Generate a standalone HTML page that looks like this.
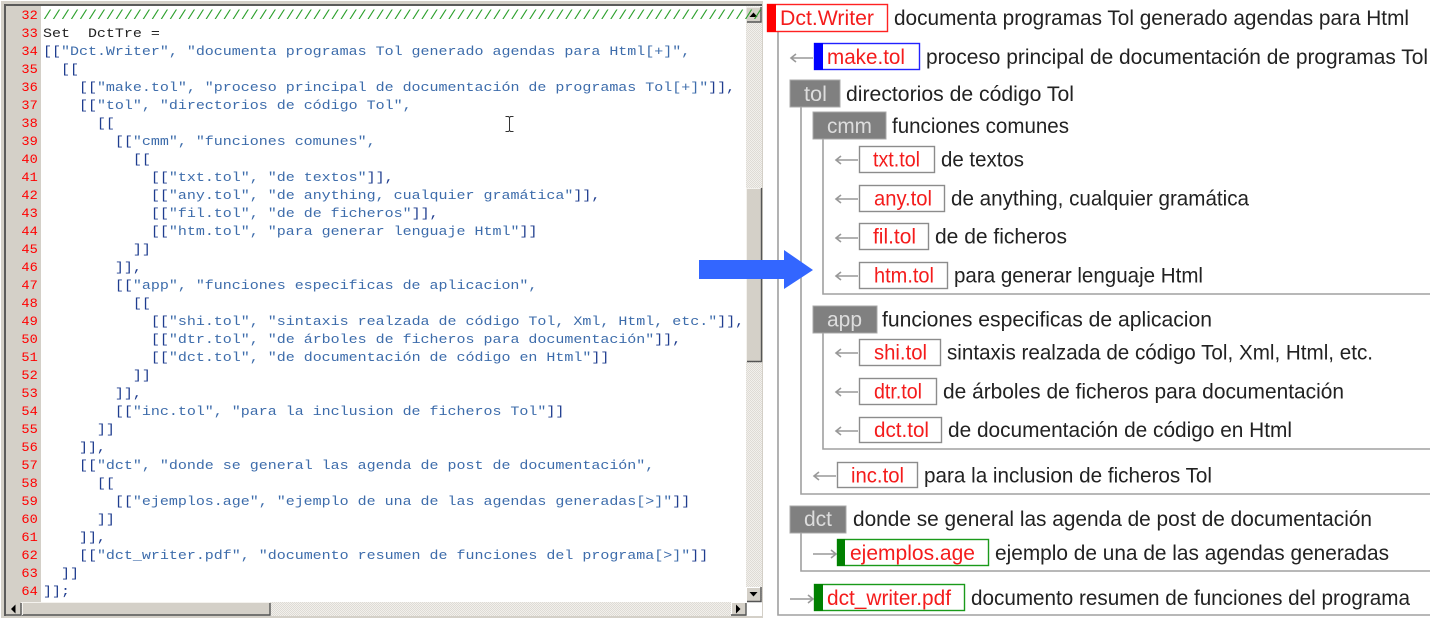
<!DOCTYPE html>
<html><head><meta charset="utf-8"><style>
html,body{margin:0;padding:0;background:#fff;width:1436px;height:620px;overflow:hidden}
svg{display:block;filter:blur(.3px)}
.c text{font-family:"Liberation Mono",monospace;font-size:13px;white-space:pre;fill:#3d6cab}
.c .b{fill:#1f3d8f}
.n text{font-family:"Liberation Mono",monospace;font-size:13px;fill:#f00;text-anchor:end;font-weight:normal}
.t text{font-family:"Liberation Sans",sans-serif;font-size:21px;fill:#222;white-space:pre}
.t text.r{fill:#f41c1c}
.t text.w{fill:#ddd}
.g{fill:#808080;stroke:#a8a8a8;stroke-width:1}
.bx{fill:#fff;stroke:#8c8c8c;stroke-width:1.4}
.l{stroke:#a0a0a0;stroke-width:1.6;fill:none}
.a{stroke:#999;stroke-width:1.6;fill:none}
</style></head><body>
<svg width="1436" height="620" viewBox="0 0 1436 620" xmlns="http://www.w3.org/2000/svg">
<defs><pattern id="d" width="2" height="2" patternUnits="userSpaceOnUse"><rect width="2" height="2" fill="#f2f0ec"/><rect width="1" height="1" fill="#dedbd5"/><rect x="1" y="1" width="1" height="1" fill="#dedbd5"/></pattern></defs>
<rect width="1436" height="620" fill="#fff"/>
<rect x="1" y="1" width="762" height="617" fill="#d4d0c8"/>
<rect x="4" y="4" width="758" height="2" fill="#5a5a5a"/>
<rect x="4" y="4" width="2" height="612" fill="#5a5a5a"/>
<rect x="6" y="6" width="756" height="610" fill="#fff"/>
<rect x="6" y="6" width="35" height="596" fill="#d4d0c8"/>
<!-- scrollbars -->
<rect x="746" y="6" width="16" height="596" fill="url(#d)"/>
<rect x="6" y="602" width="740" height="14" fill="url(#d)"/>
<rect x="746" y="7" width="15" height="15" fill="#d4d0c8"/><path d="M746 22V7H761" fill="none" stroke="#fff"/><path d="M747 22H761V7" fill="none" stroke="#555" stroke-width="1.4"/><path d="M749.500 17L753.500 12.500L757.500 17Z" fill="#000"/>
<rect x="746" y="188" width="16" height="174" fill="#d4d0c8"/><path d="M746.500 362V188.500H761" fill="none" stroke="#f4f2ee"/><path d="M747 361.500H761.500V188" fill="none" stroke="#555" stroke-width="1.4"/>
<rect x="746" y="587" width="15" height="15" fill="#d4d0c8"/><path d="M746.500 602V587.500H761" fill="none" stroke="#fff"/><path d="M747 601.500H761V587" fill="none" stroke="#555" stroke-width="1.4"/><path d="M749.500 592L753.500 596.500L757.500 592Z" fill="#000"/>
<rect x="6" y="602" width="15" height="14" fill="#d4d0c8"/><path d="M21 603V615H6" fill="none" stroke="#555" stroke-width="1.400"/><path d="M15.500 604.500L11 609L15.500 613.500Z" fill="#000"/>
<rect x="22" y="602" width="248" height="14" fill="#d4d0c8"/><path d="M270 603V615H22" fill="none" stroke="#555" stroke-width="1.400"/><path d="M22.500 615V602.500H270" fill="none" stroke="#f4f2ee"/>
<rect x="731" y="602" width="15" height="14" fill="#d4d0c8"/><path d="M731.500 615V602.500H746" fill="none" stroke="#fff"/><path d="M746 603V615H731" fill="none" stroke="#555" stroke-width="1.400"/><path d="M736 604.500L740.500 609L736 613.500Z" fill="#000"/>
<!-- I-beam cursor -->
<path d="M505.500 116.500H508.500L509.500 117.500L510.500 116.500H513.500M509.500 117.500V130.500M505.500 131.500H508.500L509.500 130.500L510.500 131.500H513.500" fill="none" stroke="#333" stroke-width="1"/>
<!-- line numbers -->
<g class="n" transform="scale(1.05,1)">
<text x="36" y="19">32</text><text x="36" y="37">33</text><text x="36" y="55">34</text><text x="36" y="73">35</text><text x="36" y="91">36</text><text x="36" y="109">37</text><text x="36" y="127">38</text><text x="36" y="145">39</text><text x="36" y="163">40</text><text x="36" y="181">41</text><text x="36" y="199">42</text><text x="36" y="217">43</text><text x="36" y="235">44</text><text x="36" y="253">45</text><text x="36" y="271">46</text><text x="36" y="289">47</text><text x="36" y="307">48</text><text x="36" y="325">49</text><text x="36" y="343">50</text><text x="36" y="361">51</text><text x="36" y="379">52</text><text x="36" y="397">53</text><text x="36" y="415">54</text><text x="36" y="433">55</text><text x="36" y="451">56</text><text x="36" y="469">57</text><text x="36" y="487">58</text><text x="36" y="505">59</text><text x="36" y="523">60</text><text x="36" y="541">61</text><text x="36" y="559">62</text><text x="36" y="577">63</text><text x="36" y="595">64</text>
</g>
<!-- code -->
<g class="c" transform="translate(43,0) scale(1.154,1)">
<text y="19" style="fill:#2ca02c">////////////////////////////////////////////////////////////////////////////////</text>
<text y="37" style="fill:#222">Set  DctTre =</text>
<text y="55"><tspan class="b">[[</tspan>"Dct.Writer", "documenta programas Tol generado agendas para Html[+]",</text>
<text y="73" class="b">  [[</text>
<text y="91"><tspan class="b">    [[</tspan>"make.tol", "proceso principal de documentación de programas Tol[+]"<tspan class="b">]],</tspan></text>
<text y="109"><tspan class="b">    [[</tspan>"tol", "directorios de código Tol",</text>
<text y="127" class="b">      [[</text>
<text y="145"><tspan class="b">        [[</tspan>"cmm", "funciones comunes",</text>
<text y="163" class="b">          [[</text>
<text y="181"><tspan class="b">            [[</tspan>"txt.tol", "de textos"<tspan class="b">]],</tspan></text>
<text y="199"><tspan class="b">            [[</tspan>"any.tol", "de anything, cualquier gramática"<tspan class="b">]],</tspan></text>
<text y="217"><tspan class="b">            [[</tspan>"fil.tol", "de de ficheros"<tspan class="b">]],</tspan></text>
<text y="235"><tspan class="b">            [[</tspan>"htm.tol", "para generar lenguaje Html"<tspan class="b">]]</tspan></text>
<text y="253" class="b">          ]]</text>
<text y="271" class="b">        ]],</text>
<text y="289"><tspan class="b">        [[</tspan>"app", "funciones especificas de aplicacion",</text>
<text y="307" class="b">          [[</text>
<text y="325"><tspan class="b">            [[</tspan>"shi.tol", "sintaxis realzada de código Tol, Xml, Html, etc."<tspan class="b">]],</tspan></text>
<text y="343"><tspan class="b">            [[</tspan>"dtr.tol", "de árboles de ficheros para documentación"<tspan class="b">]],</tspan></text>
<text y="361"><tspan class="b">            [[</tspan>"dct.tol", "de documentación de código en Html"<tspan class="b">]]</tspan></text>
<text y="379" class="b">          ]]</text>
<text y="397" class="b">        ]],</text>
<text y="415"><tspan class="b">        [[</tspan>"inc.tol", "para la inclusion de ficheros Tol"<tspan class="b">]]</tspan></text>
<text y="433" class="b">      ]]</text>
<text y="451" class="b">    ]],</text>
<text y="469"><tspan class="b">    [[</tspan>"dct", "donde se general las agenda de post de documentación",</text>
<text y="487" class="b">      [[</text>
<text y="505"><tspan class="b">        [[</tspan>"ejemplos.age", "ejemplo de una de las agendas generadas[&gt;]"<tspan class="b">]]</tspan></text>
<text y="523" class="b">      ]]</text>
<text y="541" class="b">    ]],</text>
<text y="559"><tspan class="b">    [[</tspan>"dct_writer.pdf", "documento resumen de funciones del programa[&gt;]"<tspan class="b">]]</tspan></text>
<text y="577" class="b">  ]]</text>
<text y="595" class="b">]];</text>
</g>
<!-- tree lines -->
<path class="l" d="M778 31V615H1430"/>
<path class="l" d="M801 107V494H1430"/>
<path class="l" d="M823 139V294H1430"/>
<path class="l" d="M823 333V449H1430"/>
<path class="l" d="M801 533V571H1430"/>
<!-- arrows -->
<path class="a" d="M813 58H791M796 54L791 58L796 62"/>
<path class="a" d="M858 160H836M841 156L836 160L841 164"/>
<path class="a" d="M858 199H836M841 195L836 199L841 203"/>
<path class="a" d="M858 238H836M841 234L836 238L841 242"/>
<path class="a" d="M858 276H836M841 272L836 276L841 280"/>
<path class="a" d="M858 353H836M841 349L836 353L841 357"/>
<path class="a" d="M858 392H836M841 388L836 392L841 396"/>
<path class="a" d="M858 431H836M841 427L836 431L841 435"/>
<path class="a" d="M836 476H814M819 472L814 476L819 480"/>
<path class="a" d="M813 554H836M831 550L836 554L831 558"/>
<path class="a" d="M790 599H813M808 595L813 599L808 603"/>
<!-- blue arrow -->
<path d="M699 260H784V250L813 270L784 289V279H699Z" fill="#3366ff"/>
<!-- boxes -->
<rect x="767.500" y="4.500" width="120" height="27" fill="#fff" stroke="#f22" stroke-width="1.400"/><rect x="767" y="4" width="9" height="28" fill="#f00"/>
<rect x="814.500" y="43.500" width="105" height="26" fill="#fff" stroke="#22f" stroke-width="1.400"/><rect x="814" y="43" width="9" height="27" fill="#00f"/>
<rect class="g" x="790" y="80" width="50" height="27"/>
<rect class="g" x="813" y="112" width="73" height="27"/>
<rect class="bx" x="859.500" y="146.500" width="75" height="26"/>
<rect class="bx" x="859.500" y="185.500" width="85" height="26"/>
<rect class="bx" x="859.500" y="223.500" width="69" height="26"/>
<rect class="bx" x="859.500" y="262.500" width="88" height="26"/>
<rect class="g" x="813" y="306" width="64" height="27"/>
<rect class="bx" x="859.500" y="339.500" width="81" height="26"/>
<rect class="bx" x="859.500" y="378.500" width="77" height="26"/>
<rect class="bx" x="859.500" y="417.500" width="82" height="25"/>
<rect class="bx" x="837.500" y="462.500" width="80" height="25"/>
<rect class="g" x="790" y="506" width="56" height="27"/>
<rect x="837.500" y="539.500" width="151" height="26" fill="#fff" stroke="#1a9a1a" stroke-width="1.400"/><rect x="837" y="539" width="8" height="27" fill="#008000"/>
<rect x="814.500" y="584.500" width="150" height="26" fill="#fff" stroke="#1a9a1a" stroke-width="1.400"/><rect x="814" y="584" width="9" height="27" fill="#008000"/>
<!-- text -->
<g class="t">
<text class="r" x="780" y="25" textLength="94" lengthAdjust="spacingAndGlyphs">Dct.Writer</text>
<text x="894" y="25" textLength="515" lengthAdjust="spacingAndGlyphs">documenta programas Tol generado agendas para Html</text>
<text class="r" x="827" y="64" textLength="78" lengthAdjust="spacingAndGlyphs">make.tol</text>
<text x="926" y="64" textLength="502" lengthAdjust="spacingAndGlyphs">proceso principal de documentación de programas Tol</text>
<text class="w" x="804" y="101" textLength="23" lengthAdjust="spacingAndGlyphs">tol</text>
<text x="846" y="101" textLength="228" lengthAdjust="spacingAndGlyphs">directorios de código Tol</text>
<text class="w" x="827" y="133" textLength="45" lengthAdjust="spacingAndGlyphs">cmm</text>
<text x="892" y="133" textLength="177" lengthAdjust="spacingAndGlyphs">funciones comunes</text>
<text class="r" x="873" y="166.500" textLength="47" lengthAdjust="spacingAndGlyphs">txt.tol</text>
<text x="941" y="166.500" textLength="83" lengthAdjust="spacingAndGlyphs">de textos</text>
<text class="r" x="874" y="205.500" textLength="58" lengthAdjust="spacingAndGlyphs">any.tol</text>
<text x="951" y="205.500" textLength="298" lengthAdjust="spacingAndGlyphs">de anything, cualquier gramática</text>
<text class="r" x="873" y="243.500" textLength="43" lengthAdjust="spacingAndGlyphs">fil.tol</text>
<text x="935" y="243.500" textLength="132" lengthAdjust="spacingAndGlyphs">de de ficheros</text>
<text class="r" x="874" y="282.500" textLength="60" lengthAdjust="spacingAndGlyphs">htm.tol</text>
<text x="954" y="282.500" textLength="249" lengthAdjust="spacingAndGlyphs">para generar lenguaje Html</text>
<text class="w" x="827" y="326.500" textLength="35" lengthAdjust="spacingAndGlyphs">app</text>
<text x="882" y="326.500" textLength="330" lengthAdjust="spacingAndGlyphs">funciones especificas de aplicacion</text>
<text class="r" x="874" y="359.500" textLength="53" lengthAdjust="spacingAndGlyphs">shi.tol</text>
<text x="947" y="359.500" textLength="426" lengthAdjust="spacingAndGlyphs">sintaxis realzada de código Tol, Xml, Html, etc.</text>
<text class="r" x="874" y="398.500" textLength="48" lengthAdjust="spacingAndGlyphs">dtr.tol</text>
<text x="943" y="398.500" textLength="401" lengthAdjust="spacingAndGlyphs">de árboles de ficheros para documentación</text>
<text class="r" x="874" y="437" textLength="55" lengthAdjust="spacingAndGlyphs">dct.tol</text>
<text x="948" y="437" textLength="344" lengthAdjust="spacingAndGlyphs">de documentación de código en Html</text>
<text class="r" x="851" y="482.500" textLength="53" lengthAdjust="spacingAndGlyphs">inc.tol</text>
<text x="924" y="482.500" textLength="288" lengthAdjust="spacingAndGlyphs">para la inclusion de ficheros Tol</text>
<text class="w" x="804" y="526" textLength="28" lengthAdjust="spacingAndGlyphs">dct</text>
<text x="853" y="526" textLength="519" lengthAdjust="spacingAndGlyphs">donde se general las agenda de post de documentación</text>
<text class="r" x="850" y="560" textLength="125" lengthAdjust="spacingAndGlyphs">ejemplos.age</text>
<text x="995" y="560" textLength="394" lengthAdjust="spacingAndGlyphs">ejemplo de una de las agendas generadas</text>
<text class="r" x="827" y="605" textLength="124" lengthAdjust="spacingAndGlyphs">dct_writer.pdf</text>
<text x="971" y="605" textLength="439" lengthAdjust="spacingAndGlyphs">documento resumen de funciones del programa</text>
</g>
</svg>
</body></html>
